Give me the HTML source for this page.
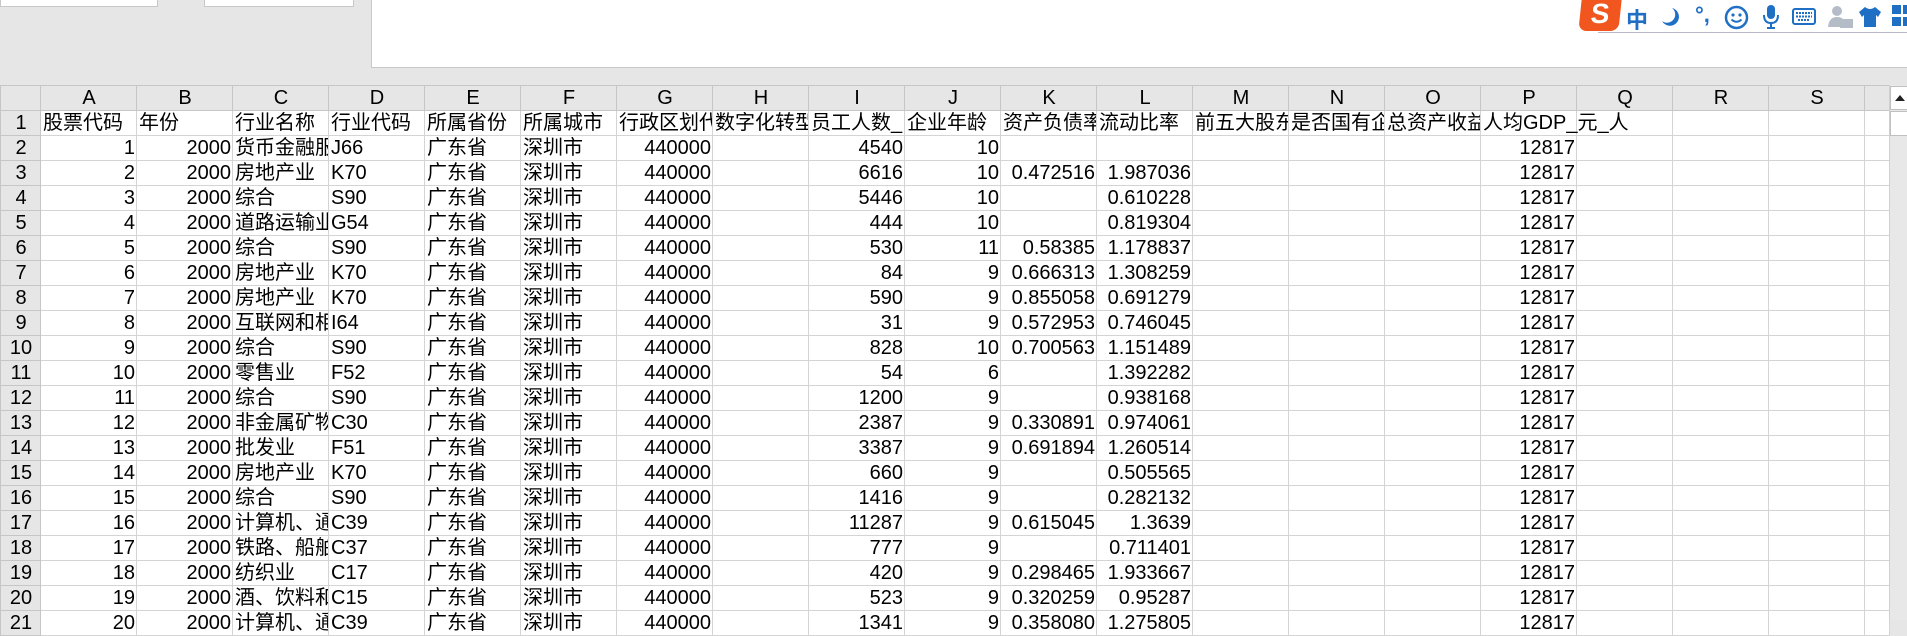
<!DOCTYPE html>
<html><head><meta charset="utf-8"><style>
*{margin:0;padding:0;box-sizing:border-box}
body{width:1907px;height:620px;overflow:hidden;background:#e6e6e6;position:relative;font-family:"Liberation Sans","Noto Sans CJK SC",sans-serif;font-size:20px;color:#000}
.top{position:absolute;left:0;top:0;width:1907px;height:85px;background:#e6e6e6}
.wb{position:absolute;background:#fff;border:1px solid #c8c8c8;border-top:none}
table{position:absolute;left:0;top:85px;width:1889px;border-collapse:collapse;table-layout:fixed;background:#fff}
td{border:1px solid #d4d4d4;height:25px;padding:0 1px 0 2px;white-space:nowrap;overflow:hidden;line-height:24px;vertical-align:bottom}
tr.h td{background:#e6e6e6;text-align:center;height:24px;border-color:#c6c6c6}
td.r{text-align:right}
td.n{background:#e6e6e6;text-align:center;border-color:#c6c6c6}
.sb{position:absolute;left:1889px;top:85px;width:18px;height:535px;background:#e8e8e8;border-left:1px solid #d0d0d0}
.ic{position:absolute;color:#1f6fc5;font-weight:bold}
</style></head><body>
<div class="top"></div>
<div class="wb" style="left:0;top:0;width:158px;height:7px"></div>
<div class="wb" style="left:204px;top:0;width:150px;height:7px"></div>
<div class="wb" style="left:371px;top:0;width:1536px;height:68px;border-right:none"></div>
<div style="position:absolute;left:1598px;top:32px;width:309px;height:1px;background:#b8b8c8"></div>
<div style="position:absolute;left:1580px;top:0;width:40px;height:31px;background:#f0561d;border-radius:0 0 8px 8px;transform:skewX(-6deg);color:#fff;font-weight:bold;font-size:28px;text-align:center;line-height:28px">S</div>
<div class="ic" style="left:1626px;top:3px;font-size:22px">中</div>
<svg style="position:absolute;left:1660px;top:6px" width="22" height="22"><path d="M12 2 A9 9 0 1 1 2 15 A8 8 0 0 0 12 2Z" fill="#1f6fc5"/></svg>
<div class="ic" style="left:1695px;top:2px;font-size:22px">°,</div>
<svg style="position:absolute;left:1724px;top:5px" width="25" height="25"><circle cx="12.5" cy="12.5" r="10.5" fill="none" stroke="#1f6fc5" stroke-width="2.5"/><circle cx="9" cy="10" r="1.6" fill="#1f6fc5"/><circle cx="16" cy="10" r="1.6" fill="#1f6fc5"/><path d="M7.5 14.5 Q12.5 19 17.5 14.5" fill="none" stroke="#1f6fc5" stroke-width="2"/></svg>
<svg style="position:absolute;left:1760px;top:4px" width="22" height="26"><rect x="7" y="1" width="8" height="14" rx="4" fill="#1f6fc5"/><path d="M4 11 Q4 19 11 19 Q18 19 18 11" fill="none" stroke="#1f6fc5" stroke-width="2"/><path d="M11 19 V24 M7 24 H15" stroke="#1f6fc5" stroke-width="2"/></svg>
<svg style="position:absolute;left:1792px;top:8px" width="24" height="17"><rect x="1" y="1" width="22" height="15" rx="2" fill="none" stroke="#1f6fc5" stroke-width="2"/><path d="M4 5h16M4 8.5h16M6 12h12" stroke="#1f6fc5" stroke-width="2" stroke-dasharray="2 1"/></svg>
<svg style="position:absolute;left:1827px;top:5px" width="28" height="24"><circle cx="10" cy="6" r="5" fill="#b4bcc8"/><path d="M1 22 Q2 12 10 12 Q16 12 17 16 V22Z" fill="#b4bcc8"/><rect x="13" y="14" width="13" height="9" fill="#b4bcc8"/></svg>
<svg style="position:absolute;left:1858px;top:6px" width="24" height="22"><path d="M7 1 L1 6 L4 11 L6 9 V21 H18 V9 L20 11 L23 6 L17 1 Q12 5 7 1Z" fill="#1f6fc5"/></svg>
<svg style="position:absolute;left:1892px;top:5px" width="15" height="24"><rect x="0" y="0" width="9" height="9" fill="#1f6fc5"/><rect x="11" y="0" width="9" height="9" fill="#1f6fc5"/><rect x="0" y="12" width="9" height="9" fill="#1f6fc5"/><rect x="11" y="12" width="9" height="9" fill="#1f6fc5"/></svg>

<table>
<colgroup><col style="width:40px"><col style="width:96px"><col style="width:96px"><col style="width:96px"><col style="width:96px"><col style="width:96px"><col style="width:96px"><col style="width:96px"><col style="width:96px"><col style="width:96px"><col style="width:96px"><col style="width:96px"><col style="width:96px"><col style="width:96px"><col style="width:96px"><col style="width:96px"><col style="width:96px"><col style="width:96px"><col style="width:96px"><col style="width:96px"><col style="width:25px"></colgroup>
<tr class="h"><td></td><td>A</td><td>B</td><td>C</td><td>D</td><td>E</td><td>F</td><td>G</td><td>H</td><td>I</td><td>J</td><td>K</td><td>L</td><td>M</td><td>N</td><td>O</td><td>P</td><td>Q</td><td>R</td><td>S</td><td></td></tr>
<tr><td class="n">1</td><td>股票代码</td><td>年份</td><td>行业名称</td><td>行业代码</td><td>所属省份</td><td>所属城市</td><td>行政区划代码</td><td>数字化转型</td><td>员工人数_</td><td>企业年龄</td><td>资产负债率</td><td>流动比率</td><td>前五大股东</td><td>是否国有企业</td><td>总资产收益率</td><td style="overflow:visible">人均GDP_元_人</td><td></td><td></td><td></td><td></td></tr>
<tr><td class="n">2</td><td class="r">1</td><td class="r">2000</td><td>货币金融服务</td><td>J66</td><td>广东省</td><td>深圳市</td><td class="r">440000</td><td></td><td class="r">4540</td><td class="r">10</td><td></td><td></td><td></td><td></td><td></td><td class="r">12817</td><td></td><td></td><td></td><td></td></tr>
<tr><td class="n">3</td><td class="r">2</td><td class="r">2000</td><td>房地产业</td><td>K70</td><td>广东省</td><td>深圳市</td><td class="r">440000</td><td></td><td class="r">6616</td><td class="r">10</td><td class="r">0.472516</td><td class="r">1.987036</td><td></td><td></td><td></td><td class="r">12817</td><td></td><td></td><td></td><td></td></tr>
<tr><td class="n">4</td><td class="r">3</td><td class="r">2000</td><td>综合</td><td>S90</td><td>广东省</td><td>深圳市</td><td class="r">440000</td><td></td><td class="r">5446</td><td class="r">10</td><td></td><td class="r">0.610228</td><td></td><td></td><td></td><td class="r">12817</td><td></td><td></td><td></td><td></td></tr>
<tr><td class="n">5</td><td class="r">4</td><td class="r">2000</td><td>道路运输业</td><td>G54</td><td>广东省</td><td>深圳市</td><td class="r">440000</td><td></td><td class="r">444</td><td class="r">10</td><td></td><td class="r">0.819304</td><td></td><td></td><td></td><td class="r">12817</td><td></td><td></td><td></td><td></td></tr>
<tr><td class="n">6</td><td class="r">5</td><td class="r">2000</td><td>综合</td><td>S90</td><td>广东省</td><td>深圳市</td><td class="r">440000</td><td></td><td class="r">530</td><td class="r">11</td><td class="r">0.58385</td><td class="r">1.178837</td><td></td><td></td><td></td><td class="r">12817</td><td></td><td></td><td></td><td></td></tr>
<tr><td class="n">7</td><td class="r">6</td><td class="r">2000</td><td>房地产业</td><td>K70</td><td>广东省</td><td>深圳市</td><td class="r">440000</td><td></td><td class="r">84</td><td class="r">9</td><td class="r">0.666313</td><td class="r">1.308259</td><td></td><td></td><td></td><td class="r">12817</td><td></td><td></td><td></td><td></td></tr>
<tr><td class="n">8</td><td class="r">7</td><td class="r">2000</td><td>房地产业</td><td>K70</td><td>广东省</td><td>深圳市</td><td class="r">440000</td><td></td><td class="r">590</td><td class="r">9</td><td class="r">0.855058</td><td class="r">0.691279</td><td></td><td></td><td></td><td class="r">12817</td><td></td><td></td><td></td><td></td></tr>
<tr><td class="n">9</td><td class="r">8</td><td class="r">2000</td><td>互联网和相关服务</td><td>I64</td><td>广东省</td><td>深圳市</td><td class="r">440000</td><td></td><td class="r">31</td><td class="r">9</td><td class="r">0.572953</td><td class="r">0.746045</td><td></td><td></td><td></td><td class="r">12817</td><td></td><td></td><td></td><td></td></tr>
<tr><td class="n">10</td><td class="r">9</td><td class="r">2000</td><td>综合</td><td>S90</td><td>广东省</td><td>深圳市</td><td class="r">440000</td><td></td><td class="r">828</td><td class="r">10</td><td class="r">0.700563</td><td class="r">1.151489</td><td></td><td></td><td></td><td class="r">12817</td><td></td><td></td><td></td><td></td></tr>
<tr><td class="n">11</td><td class="r">10</td><td class="r">2000</td><td>零售业</td><td>F52</td><td>广东省</td><td>深圳市</td><td class="r">440000</td><td></td><td class="r">54</td><td class="r">6</td><td></td><td class="r">1.392282</td><td></td><td></td><td></td><td class="r">12817</td><td></td><td></td><td></td><td></td></tr>
<tr><td class="n">12</td><td class="r">11</td><td class="r">2000</td><td>综合</td><td>S90</td><td>广东省</td><td>深圳市</td><td class="r">440000</td><td></td><td class="r">1200</td><td class="r">9</td><td></td><td class="r">0.938168</td><td></td><td></td><td></td><td class="r">12817</td><td></td><td></td><td></td><td></td></tr>
<tr><td class="n">13</td><td class="r">12</td><td class="r">2000</td><td>非金属矿物制品业</td><td>C30</td><td>广东省</td><td>深圳市</td><td class="r">440000</td><td></td><td class="r">2387</td><td class="r">9</td><td class="r">0.330891</td><td class="r">0.974061</td><td></td><td></td><td></td><td class="r">12817</td><td></td><td></td><td></td><td></td></tr>
<tr><td class="n">14</td><td class="r">13</td><td class="r">2000</td><td>批发业</td><td>F51</td><td>广东省</td><td>深圳市</td><td class="r">440000</td><td></td><td class="r">3387</td><td class="r">9</td><td class="r">0.691894</td><td class="r">1.260514</td><td></td><td></td><td></td><td class="r">12817</td><td></td><td></td><td></td><td></td></tr>
<tr><td class="n">15</td><td class="r">14</td><td class="r">2000</td><td>房地产业</td><td>K70</td><td>广东省</td><td>深圳市</td><td class="r">440000</td><td></td><td class="r">660</td><td class="r">9</td><td></td><td class="r">0.505565</td><td></td><td></td><td></td><td class="r">12817</td><td></td><td></td><td></td><td></td></tr>
<tr><td class="n">16</td><td class="r">15</td><td class="r">2000</td><td>综合</td><td>S90</td><td>广东省</td><td>深圳市</td><td class="r">440000</td><td></td><td class="r">1416</td><td class="r">9</td><td></td><td class="r">0.282132</td><td></td><td></td><td></td><td class="r">12817</td><td></td><td></td><td></td><td></td></tr>
<tr><td class="n">17</td><td class="r">16</td><td class="r">2000</td><td>计算机、通信</td><td>C39</td><td>广东省</td><td>深圳市</td><td class="r">440000</td><td></td><td class="r">11287</td><td class="r">9</td><td class="r">0.615045</td><td class="r">1.3639</td><td></td><td></td><td></td><td class="r">12817</td><td></td><td></td><td></td><td></td></tr>
<tr><td class="n">18</td><td class="r">17</td><td class="r">2000</td><td>铁路、船舶</td><td>C37</td><td>广东省</td><td>深圳市</td><td class="r">440000</td><td></td><td class="r">777</td><td class="r">9</td><td></td><td class="r">0.711401</td><td></td><td></td><td></td><td class="r">12817</td><td></td><td></td><td></td><td></td></tr>
<tr><td class="n">19</td><td class="r">18</td><td class="r">2000</td><td>纺织业</td><td>C17</td><td>广东省</td><td>深圳市</td><td class="r">440000</td><td></td><td class="r">420</td><td class="r">9</td><td class="r">0.298465</td><td class="r">1.933667</td><td></td><td></td><td></td><td class="r">12817</td><td></td><td></td><td></td><td></td></tr>
<tr><td class="n">20</td><td class="r">19</td><td class="r">2000</td><td>酒、饮料和</td><td>C15</td><td>广东省</td><td>深圳市</td><td class="r">440000</td><td></td><td class="r">523</td><td class="r">9</td><td class="r">0.320259</td><td class="r">0.95287</td><td></td><td></td><td></td><td class="r">12817</td><td></td><td></td><td></td><td></td></tr>
<tr><td class="n">21</td><td class="r">20</td><td class="r">2000</td><td>计算机、通信</td><td>C39</td><td>广东省</td><td>深圳市</td><td class="r">440000</td><td></td><td class="r">1341</td><td class="r">9</td><td class="r">0.358080</td><td class="r">1.275805</td><td></td><td></td><td></td><td class="r">12817</td><td></td><td></td><td></td><td></td></tr>
</table>
<div class="sb">
<div style="position:absolute;left:0;top:1px;width:18px;height:24px;background:#fff;border:1px solid #c0c0c0"><div style="margin:8px 0 0 4px;width:0;height:0;border-left:5px solid transparent;border-right:5px solid transparent;border-bottom:6px solid #222"></div></div>
<div style="position:absolute;left:0;top:26px;width:18px;height:25px;background:#fff;border:1px solid #c0c0c0"></div>
</div>
</body></html>
